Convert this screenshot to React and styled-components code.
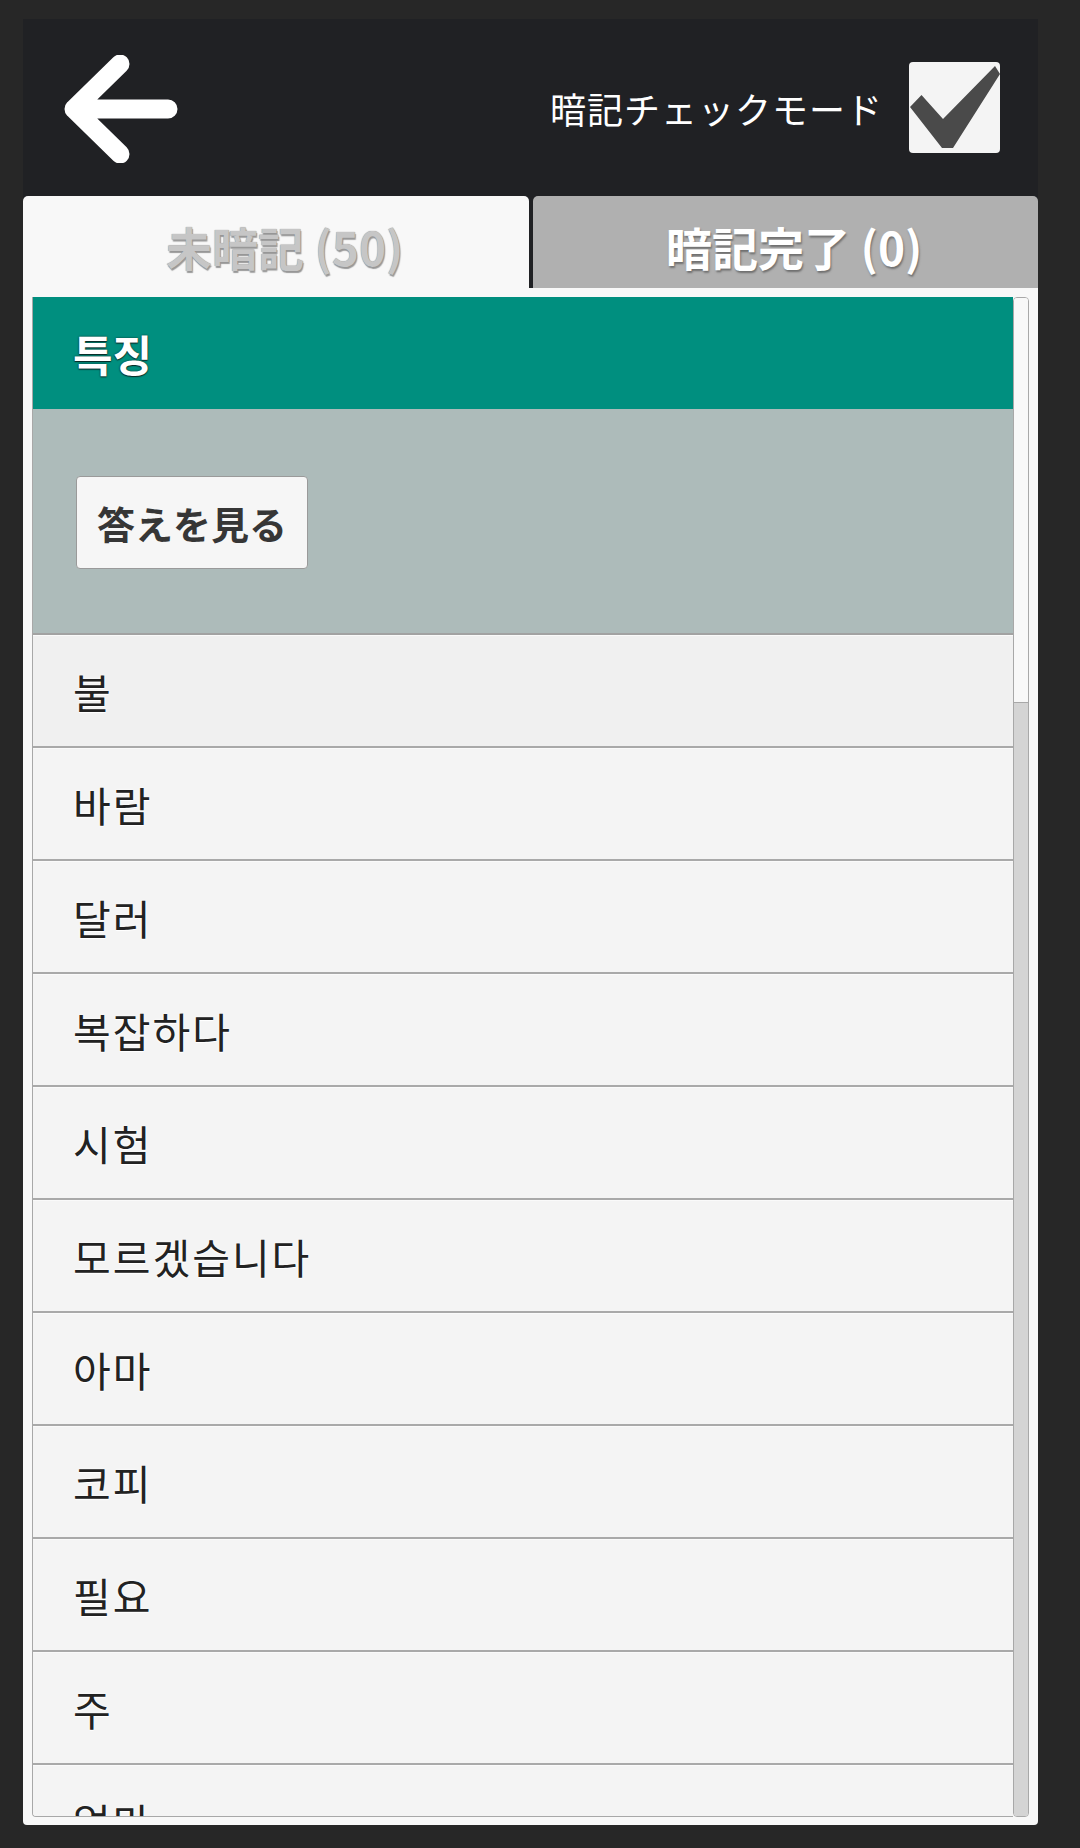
import React from "react";
import styled, { createGlobalStyle } from "styled-components";

const GlobalStyle = createGlobalStyle`
  html, body { margin: 0; padding: 0; background: #272727; }
  body { font-family: "Noto Sans CJK JP", "Noto Sans CJK KR", sans-serif; }
  * { box-sizing: border-box; }
`;

const Page = styled.div`
  width: 1080px;
  height: 1848px;
  padding: 19px 42px 23px 23px;
  display: flex;
  flex-direction: column;
  background: #272727;
`;

const Header = styled.header`
  height: 177px;
  flex: none;
  background: #202124;
  display: flex;
  align-items: center;
  padding: 0 38px 0 41px;
`;

const BackButton = styled.button`
  border: 0;
  background: transparent;
  padding: 0;
  margin-top: 2px;
  display: flex;
  cursor: pointer;
`;

const Spacer = styled.div`
  flex: 1;
`;

const ModeLabel = styled.span`
  color: #ffffff;
  font-size: 36px;
  letter-spacing: 1px;
  margin-right: 26px;
  font-family: "Noto Sans CJK JP", sans-serif;
`;

const CheckBox = styled.div`
  width: 91px;
  height: 91px;
  background: #f4f4f4;
  border-radius: 4px;
  display: flex;
`;

const TabBar = styled.nav`
  height: 92px;
  flex: none;
  display: grid;
  grid-template-columns: 1fr 1fr;
  column-gap: 4px;
  background: #202124;
`;

const Tab = styled.div`
  border-radius: 5px 5px 0 0;
  background: ${(p) => (p.$active ? "#f8f8f8" : "#b0b0b0")};
  color: ${(p) => (p.$active ? "#c6c6c6" : "#ffffff")};
  text-shadow: ${(p) =>
    p.$active
      ? "0 0 1px #808080, 1px 2px 1px #9a9a9a"
      : "1px 2px 2px #6f6f6f"};
  font-family: "Noto Sans CJK JP", sans-serif;
  font-weight: 700;
  font-size: 46px;
  display: flex;
  align-items: center;
  justify-content: center;
  padding: 8px 0 0 18px;
  white-space: pre;
`;

const Panel = styled.section`
  flex: 1;
  min-height: 0;
  background: #f8f8f8;
  border-radius: 0 0 4px 4px;
  padding: 9px 9px 8px 9px;
  display: flex;
`;

const ListContent = styled.div`
  flex: 1;
  min-width: 0;
  overflow: hidden;
  border-left: 1px solid #a8a8a8;
  border-bottom: 1px solid #a8a8a8;
  border-radius: 0 0 0 4px;
  display: flex;
  flex-direction: column;
`;

const Scrollbar = styled.div`
  width: 16px;
  flex: none;
  border: 1px solid #a8a8a8;
  border-radius: 4px;
  overflow: hidden;
  display: flex;
  flex-direction: column;
`;

const ScrollThumb = styled.div`
  height: 405px;
  flex: none;
  background: #f8f8f8;
  border-bottom: 1px solid #a8a8a8;
`;

const ScrollTrack = styled.div`
  flex: 1;
  background: #d4d4d4;
`;

const CategoryHeader = styled.div`
  height: 112px;
  flex: none;
  background: #008f7f;
  display: flex;
  align-items: center;
  padding-left: 40px;
  color: #ffffff;
  font-family: "Noto Sans CJK KR", sans-serif;
  font-weight: 700;
  font-size: 43px;
  text-shadow: 0 0 2px #0a2a26, 0 1px 1px #0a2a26;
`;

const AnswerArea = styled.div`
  height: 226px;
  flex: none;
  background: #adbbba;
  border-bottom: 2px solid #a2a2a2;
  display: flex;
  align-items: center;
  padding-left: 43px;
`;

const RevealButton = styled.button`
  width: 232px;
  height: 93px;
  background: #f6f6f6;
  border: 1px solid #9a9a9a;
  border-radius: 4px;
  font-family: "Noto Sans CJK JP", sans-serif;
  font-weight: 700;
  font-size: 38px;
  color: #363636;
  padding: 0;
  margin-top: 2px;
  cursor: pointer;
`;

const WordRow = styled.div`
  height: 113px;
  flex: none;
  background: ${(p) => (p.$first ? "#f0f0f0" : "#f4f4f4")};
  border-top: 1px solid #fafafa;
  border-bottom: 2px solid #a9a9a9;
  display: flex;
  align-items: center;
  padding-left: 40px;
  font-family: "Noto Sans CJK KR", sans-serif;
  font-size: 41px;
  letter-spacing: 2px;
  color: #222222;
  text-shadow: 0 1px 0 #fff, 0 0 3px #fff;
`;

const words = [
  "불",
  "바람",
  "달러",
  "복잡하다",
  "시험",
  "모르겠습니다",
  "아마",
  "코피",
  "필요",
  "주",
  "얼마",
];

function BackArrow() {
  return (
    <svg width="114" height="108" viewBox="0 0 114 108">
      <path
        d="M10 54 L56 9 M10 54 L56 99 M10 54 H104"
        stroke="#ffffff"
        strokeWidth="19"
        strokeLinecap="round"
        strokeLinejoin="round"
        fill="none"
      />
    </svg>
  );
}

function CheckMark() {
  return (
    <svg width="91" height="91" viewBox="0 0 91 91">
      <polygon
        points="1,45 12.5,33 34,57 86,4 91,12 44,86 33,86"
        fill="#4a4a4a"
      />
    </svg>
  );
}

export default function App() {
  return (
    <>
      <GlobalStyle />
      <Page>
        <Header>
          <BackButton aria-label="戻る">
            <BackArrow />
          </BackButton>
          <Spacer />
          <ModeLabel>暗記チェックモード</ModeLabel>
          <CheckBox>
            <CheckMark />
          </CheckBox>
        </Header>
        <TabBar>
          <Tab $active>未暗記 (50)</Tab>
          <Tab>暗記完了 (0)</Tab>
        </TabBar>
        <Panel>
          <ListContent>
            <CategoryHeader>특징</CategoryHeader>
            <AnswerArea>
              <RevealButton>答えを見る</RevealButton>
            </AnswerArea>
            {words.map((w, i) => (
              <WordRow key={w} $first={i === 0}>
                {w}
              </WordRow>
            ))}
          </ListContent>
          <Scrollbar>
            <ScrollThumb />
            <ScrollTrack />
          </Scrollbar>
        </Panel>
      </Page>
    </>
  );
}
